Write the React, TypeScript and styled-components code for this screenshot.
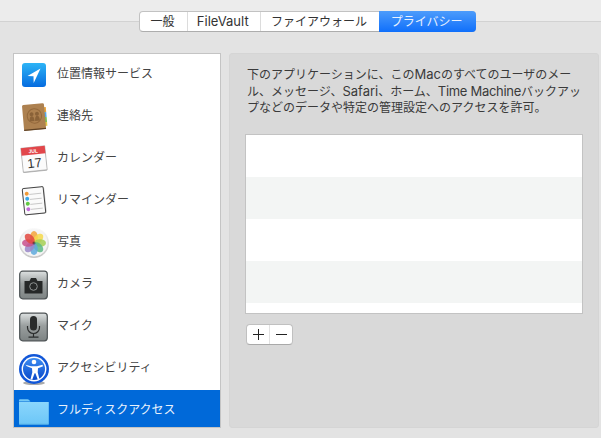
import React from "react";
import styled, { createGlobalStyle } from "styled-components";

const GlobalStyle = createGlobalStyle`
  html, body {
    margin: 0;
    padding: 0;
    background: #e3e3e3;
  }
  body {
    font-family: Inter, "Noto Sans CJK JP", sans-serif;
    font-size: 12px;
    color: #2b2b2b;
  }
`;

const Page = styled.div`
  width: 601px;
  height: 438px;
  overflow: hidden;
  background: #e3e3e3;
`;

const TitleBar = styled.header`
  box-sizing: border-box;
  height: 22px;
  padding: 11px 0 0 139px;
  background: #ececec;
  border-bottom: 1px solid #d2d2d2;
`;

const Tabs = styled.nav`
  display: flex;
  width: 337px;
  height: 21px;
  box-sizing: border-box;
  background: #fff;
  border-radius: 4px;
  border: 1px solid #c2c2c2;
  border-bottom-color: #adadad;
  position: relative;
`;

const Tab = styled.div<{ $width: number; $active?: boolean }>`
  width: ${(p) => p.$width}px;
  display: flex;
  align-items: center;
  justify-content: center;
  box-sizing: border-box;
  padding-right: 2px;
  font-size: 12px;
  line-height: 19px;
  color: ${(p) => (p.$active ? "#e8f1ff" : "#333")};
  background: ${(p) => (p.$active ? "linear-gradient(#4d9cfb, #0f6ffb)" : "transparent")};
  border-right: ${(p) => (p.$active ? "none" : "1px solid #dcdcdc")};
  border-radius: ${(p) => (p.$active ? "0 4px 4px 0" : "0")};
  margin: ${(p) => (p.$active ? "-1px -1px -1px 0" : "0")};

  &:nth-last-child(2) {
    border-right: none;
  }
`;

const Latin = styled.span<{ $tight?: boolean }>`
  font-size: 13px;
  letter-spacing: ${(p) => (p.$tight ? "-0.3px" : "0")};
`;

const Content = styled.main`
  display: flex;
  gap: 8px;
  padding: 31px 3px 0 13px;
`;

const Sidebar = styled.ul`
  box-sizing: border-box;
  flex: none;
  width: 208px;
  height: 375px;
  margin: 0;
  padding: 0;
  list-style: none;
  background: #fff;
  border: 1px solid #c4c4c4;
  overflow: hidden;
`;

const Row = styled.li<{ $selected?: boolean }>`
  height: 42px;
  display: flex;
  align-items: center;
  gap: 7px;
  padding-left: 4px;
  background: ${(p) => (p.$selected ? "#0069d9" : "transparent")};
  color: ${(p) => (p.$selected ? "#e8f1fc" : "#444")};
`;

const RowIcon = styled.svg`
  width: 32px;
  height: 32px;
  flex: none;
`;

const RowLabel = styled.span`
  font-size: 12px;
  line-height: 16px;
  position: relative;
  top: -1px;
`;

const Panel = styled.section`
  box-sizing: border-box;
  flex: none;
  width: 370px;
  height: 375px;
  padding: 13px 16px 0 16px;
  background: #d9d9d9;
  border-radius: 4px;
  box-shadow: inset 0 0 0 1px #d5d5d5;
`;

const Description = styled.p`
  margin: 0 0 20px 2px;
  height: 48px;
  font-size: 12px;
  line-height: 16px;
  color: #3a3a3a;
  white-space: nowrap;
`;

const AppList = styled.div`
  box-sizing: border-box;
  height: 180px;
  border: 1px solid #c3c3c3;
  background: #fff;
  overflow: hidden;
`;

const AppRow = styled.div<{ $striped?: boolean }>`
  height: 42px;
  background: ${(p) => (p.$striped ? "#f3f5f4" : "#fff")};
`;

const ButtonGroup = styled.div`
  display: flex;
  box-sizing: border-box;
  width: 47px;
  height: 21px;
  margin: 10px 0 0 1px;
  background: #fff;
  border-radius: 4px;
  border: 1px solid #c0c0c0;
  border-bottom-color: #a9a9a9;
`;

const IconButton = styled.button`
  flex: 1;
  padding: 0;
  border: none;
  background: transparent;
  display: flex;
  align-items: center;
  justify-content: center;

  & + & {
    border-left: 1px solid #e2e2e2;
  }
`;

const Glyph = styled.svg`
  width: 13px;
  height: 13px;
`;

const LocationIcon = () => (
  <RowIcon viewBox="0 0 32 32">
    <defs>
      <linearGradient id="loc" x1="0" y1="0" x2="0" y2="1">
        <stop offset="0" stopColor="#2db4f6" />
        <stop offset="1" stopColor="#056bdf" />
      </linearGradient>
    </defs>
    <rect x="4" y="4" width="24" height="24" rx="3" fill="url(#loc)" />
    <path d="M22.5 9.5 9.5 17l6 .2.2 6.8z" fill="#fff" />
  </RowIcon>
);

const ContactsIcon = () => (
  <RowIcon viewBox="0 0 32 32">
    <g transform="rotate(-5 16 16)">
      <rect x="26" y="7" width="2.6" height="5" fill="#e9a33b" />
      <rect x="26" y="12" width="2.6" height="5" fill="#58a8e8" />
      <rect x="26" y="17" width="2.6" height="5" fill="#7cc05a" />
      <rect x="26" y="22" width="2.6" height="4" fill="#e4c84a" />
      <rect x="5" y="3" width="22" height="26" rx="1.5" fill="#ad8150" />
      <rect x="5" y="27.8" width="22" height="1.2" fill="#5f4225" />
      <circle cx="16.5" cy="15" r="7.2" fill="none" stroke="#94693c" strokeWidth="1" />
      <circle cx="13.8" cy="13" r="2" fill="#8a6238" />
      <circle cx="19.2" cy="13" r="2" fill="#8a6238" />
      <path d="M11.4 20c0-3.6 1-5 2.4-5s2.4 1.4 2.4 5zM16.8 20c0-3.6 1-5 2.4-5s2.4 1.4 2.4 5z" fill="#8a6238" />
    </g>
  </RowIcon>
);

const CalendarIcon = () => (
  <RowIcon viewBox="0 0 32 32">
    <g transform="rotate(-6 16 16)">
      <rect x="4" y="5" width="24" height="24" rx="1" fill="#666" opacity="0.45" />
      <rect x="4" y="4" width="24" height="24" fill="#fbfbfb" stroke="#8a8a8a" strokeWidth="0.5" />
      <rect x="4" y="4" width="24" height="7.5" fill="#e2474b" />
      <text x="16" y="9.8" fontSize="5" fontWeight="700" fill="#fff" textAnchor="middle" fontFamily="Liberation Sans">JUL</text>
      <text x="16" y="24.5" fontSize="13" fill="#333" textAnchor="middle" fontFamily="Liberation Sans">17</text>
    </g>
  </RowIcon>
);

const ReminderLine = styled.path`
  stroke: #b5b5b5;
  stroke-width: 0.7;
`;

const RemindersIcon = () => (
  <RowIcon viewBox="0 0 32 32">
    <g transform="rotate(-6 16 16)">
      <rect x="5.5" y="3" width="22" height="26.5" rx="1.5" fill="#666" opacity="0.35" />
      <rect x="5.5" y="2.5" width="21" height="26.5" rx="1.5" fill="#fafafa" stroke="#444" strokeWidth="1" />
      <ReminderLine d="M12 9h12M12 14h12M12 19h12M12 24h12" />
      <circle cx="9.5" cy="8" r="2" fill="#f09a37" />
      <circle cx="9.5" cy="13" r="2" fill="#3aa7e8" />
      <circle cx="9.5" cy="18" r="2" fill="#62c843" />
      <circle cx="9.5" cy="23.5" r="2" fill="#c06cd8" />
    </g>
  </RowIcon>
);

const petals = ["#f3a33a", "#f5d84a", "#a5cf55", "#5cb887", "#5ea9dd", "#9a86c8", "#c9508c", "#e2483f"];

const PhotosIcon = () => (
  <RowIcon viewBox="0 0 32 32">
    <defs>
      <linearGradient id="disk" x1="0" y1="0" x2="0" y2="1">
        <stop offset="0" stopColor="#fafafa" />
        <stop offset="1" stopColor="#c6c6c6" />
      </linearGradient>
    </defs>
    <circle cx="16" cy="16" r="15" fill="url(#disk)" />
    <circle cx="16" cy="16" r="13.5" fill="#f4f4f4" />
    {petals.map((color, i) => (
      <ellipse
        key={color}
        cx="16"
        cy="10"
        rx="3.8"
        ry="6"
        fill={color}
        opacity="0.85"
        transform={`rotate(${i * 45} 16 16)`}
      />
    ))}
    <circle cx="16" cy="16" r="1.5" fill="#222" opacity="0.5" />
  </RowIcon>
);

const DeviceFrame = ({ id, children }: { id: string; children: React.ReactNode }) => (
  <RowIcon viewBox="0 0 32 32">
    <defs>
      <linearGradient id={id} x1="0" y1="0" x2="0" y2="1">
        <stop offset="0" stopColor="#dde1e1" />
        <stop offset="0.45" stopColor="#9a9f9f" />
        <stop offset="1" stopColor="#7d8383" />
      </linearGradient>
    </defs>
    <rect x="1.7" y="2.2" width="27.6" height="27.6" rx="3" fill={`url(#${id})`} stroke="#4c5254" strokeWidth="1.2" />
    {children}
  </RowIcon>
);

const CameraIcon = () => (
  <DeviceFrame id="cam">
    <path d="M6.5 12h5l1.5-3h5l1.5 3h5v12.5h-18z" fill="#262828" />
    <circle cx="15.5" cy="17.5" r="3.8" fill="none" stroke="#8d9191" strokeWidth="1" />
  </DeviceFrame>
);

const MicIcon = () => (
  <DeviceFrame id="mic">
    <rect x="12" y="5" width="7" height="14.5" rx="3.5" fill="#2a2c2c" />
    <path d="M9.5 15v1.5a6 6 0 0 0 12 0V15M15.5 22.5V26M10.5 26.2h10" fill="none" stroke="#2a2c2c" strokeWidth="1.2" />
  </DeviceFrame>
);

const AccessibilityIcon = () => (
  <RowIcon viewBox="0 0 32 32">
    <defs>
      <linearGradient id="acc" x1="0" y1="0" x2="0" y2="1">
        <stop offset="0" stopColor="#3c8cf2" />
        <stop offset="1" stopColor="#0a49c9" />
      </linearGradient>
    </defs>
    <ellipse cx="16" cy="30" rx="11" ry="2" fill="#555" opacity="0.5" />
    <circle cx="16" cy="16" r="15" fill="#1257d8" />
    <circle cx="16" cy="16" r="12.4" fill="#fff" />
    <circle cx="16" cy="16" r="11" fill="url(#acc)" />
    <circle cx="16" cy="9" r="2.3" fill="#fff" />
    <path d="M7.5 11.8 13 13.2h6l5.5-1.4.5 1.5-5 1.9-.3 4 1.8 7-1.7.5-2.4-6.5h-.8l-2.4 6.5-1.7-.5 1.8-7-.3-4-5-1.9z" fill="#fff" />
  </RowIcon>
);

const FolderIcon = () => (
  <RowIcon viewBox="0 0 32 32">
    <defs>
      <linearGradient id="fold" x1="0" y1="0" x2="0" y2="1">
        <stop offset="0" stopColor="#8ad6fc" />
        <stop offset="1" stopColor="#6cc6f7" />
      </linearGradient>
    </defs>
    <path d="M1 5.5c0-.8.5-1.3 1.3-1.3h7.2c.7 0 1.2.3 1.6.8l1.4 1.6H1z" fill="#74c9f6" />
    <path d="M1 7h29.8v21.5c0 .6-.4 1-1 1H2c-.6 0-1-.4-1-1z" fill="url(#fold)" />
    <rect x="1" y="28.7" width="29.8" height="0.8" fill="#58b2e6" />
  </RowIcon>
);

const PlusGlyph = () => (
  <Glyph viewBox="0 0 13 13">
    <path d="M6.5 1v11M1 6.5h11" stroke="#222" strokeWidth="1" fill="none" />
  </Glyph>
);

const MinusGlyph = () => (
  <Glyph viewBox="0 0 13 13">
    <path d="M1 6.5h11" stroke="#222" strokeWidth="1" fill="none" />
  </Glyph>
);

const categories = [
  { label: "位置情報サービス", Icon: LocationIcon },
  { label: "連絡先", Icon: ContactsIcon },
  { label: "カレンダー", Icon: CalendarIcon },
  { label: "リマインダー", Icon: RemindersIcon },
  { label: "写真", Icon: PhotosIcon },
  { label: "カメラ", Icon: CameraIcon },
  { label: "マイク", Icon: MicIcon },
  { label: "アクセシビリティ", Icon: AccessibilityIcon },
  { label: "フルディスクアクセス", Icon: FolderIcon, selected: true },
];

export default function App() {
  return (
    <Page>
      <GlobalStyle />
      <TitleBar>
        <Tabs>
          <Tab $width={48}>一般</Tab>
          <Tab $width={73}>
            <Latin>FileVault</Latin>
          </Tab>
          <Tab $width={119}>ファイアウォール</Tab>
          <Tab $width={97} $active>
            プライバシー
          </Tab>
        </Tabs>
      </TitleBar>
      <Content>
        <Sidebar>
          {categories.map(({ label, Icon, selected }) => (
            <Row key={label} $selected={selected}>
              <Icon />
              <RowLabel>{label}</RowLabel>
            </Row>
          ))}
        </Sidebar>
        <Panel>
          <Description>
            下のアプリケーションに、この<Latin>Mac</Latin>のすべてのユーザのメー
            <br />
            ル、メッセージ、<Latin>Safari</Latin>、ホーム、<Latin $tight>Time Machine</Latin>バックアッ
            <br />
            プなどのデータや特定の管理設定へのアクセスを許可。
          </Description>
          <AppList>
            <AppRow />
            <AppRow $striped />
            <AppRow />
            <AppRow $striped />
          </AppList>
          <ButtonGroup>
            <IconButton>
              <PlusGlyph />
            </IconButton>
            <IconButton>
              <MinusGlyph />
            </IconButton>
          </ButtonGroup>
        </Panel>
      </Content>
    </Page>
  );
}
